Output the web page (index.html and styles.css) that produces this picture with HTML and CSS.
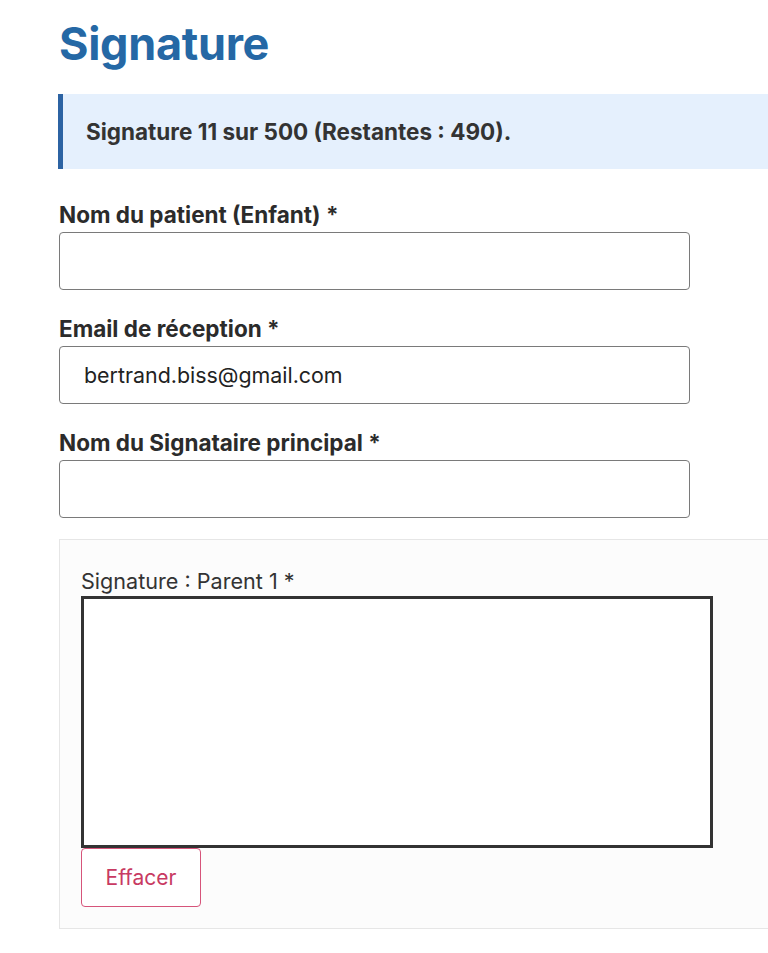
FILE: index.html
```html
<!DOCTYPE html>
<html lang="fr">
<head>
<meta charset="utf-8">
<link rel="stylesheet" href="styles.css">
</head>
<body>
<main class="page">
  <h1 class="title">Signature</h1>
  <div class="notice">Signature 11 sur 500 (Restantes : 490).</div>
  <form class="form">
    <div class="field">
      <label class="label">Nom du patient (Enfant) *</label>
      <div class="input"></div>
    </div>
    <div class="field">
      <label class="label">Email de réception *</label>
      <div class="input">bertrand.biss@gmail.com</div>
    </div>
    <div class="field">
      <label class="label">Nom du Signataire principal *</label>
      <div class="input"></div>
    </div>
    <div class="sigpanel">
      <div class="siglabel">Signature : Parent 1 *</div>
      <div class="canvas"></div>
      <button type="button" class="clear">Effacer</button>
    </div>
  </form>
</main>
</body>
</html>
```

FILE: styles.css
```css
html, body {
  margin: 0;
  padding: 0;
  background: #ffffff;
  overflow: hidden;
}
body {
  font-family: Inter, Roboto, "Liberation Sans", sans-serif;
  color: #2b2b2b;
}
.page {
  padding: 16px 0 0 59px;
}
.title {
  margin: 0;
  font-weight: 700;
  font-size: 45px;
  line-height: 56px;
  color: #2568a5;
  letter-spacing: -0.3px;
}
.notice {
  margin-top: 22px;
  margin-left: -1px;
  height: 75px;
  box-sizing: border-box;
  border-left: 5px solid #2c63a3;
  background: #e5f0fd;
  padding-left: 23px;
  display: flex;
  align-items: center;
  font-weight: 700;
  font-size: 22.5px;
  color: #333;
  width: 800px;
}
.form {
  margin-top: 29px;
  display: flex;
  flex-direction: column;
  gap: 22px;
}
.field {
  display: flex;
  flex-direction: column;
}
.label {
  font-weight: 700;
  font-size: 22.5px;
  line-height: 34px;
  color: #2b2b2b;
  margin-bottom: 0;
}
.input {
  width: 631px;
  height: 58px;
  box-sizing: border-box;
  border: 1px solid #7a7a7a;
  border-radius: 4px;
  padding: 0 24px;
  display: flex;
  align-items: center;
  font-size: 21.4px;
  color: #222;
}
.sigpanel {
  width: 800px;
  box-sizing: border-box;
  background: #fcfcfc;
  border: 1px solid #e6e6e6;
  margin-top: -1px;
  padding: 26px 0 21px 21px;
  display: flex;
  flex-direction: column;
  align-items: flex-start;
}
.siglabel {
  font-size: 21.6px;
  line-height: 30px;
  color: #333;
}
.canvas {
  width: 632px;
  height: 252px;
  box-sizing: border-box;
  border: 3px solid #333;
  background: #ffffff;
}
.clear {
  width: 120px;
  height: 59px;
  box-sizing: border-box;
  border: 1px solid #d6547a;
  border-radius: 4px;
  background: #ffffff;
  color: #c83a62;
  font-family: Inter, Roboto, sans-serif;
  font-size: 21px;
  padding: 0;
}
```
